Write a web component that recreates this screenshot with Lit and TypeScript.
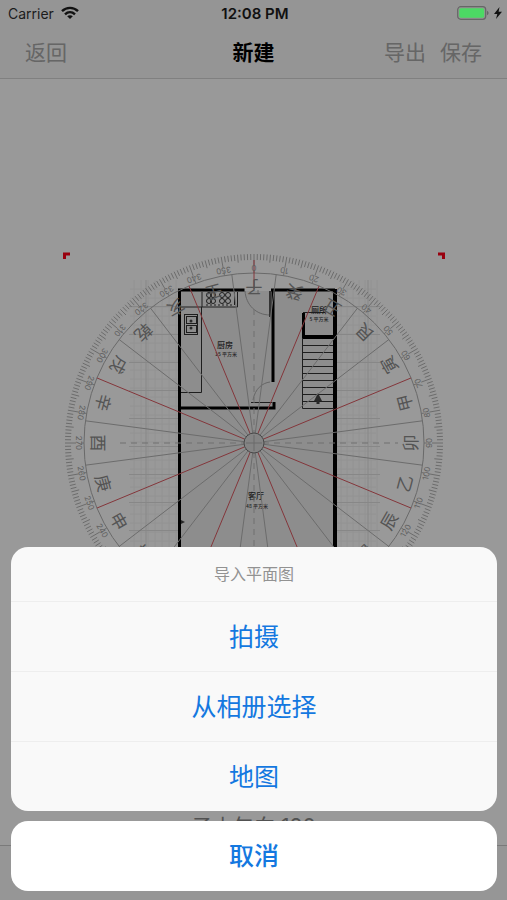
import { LitElement, html, css, svg } from "lit";
import { customElement, state } from "lit/decorators.js";

const CX = 254;
const CY = 443;
const MOUNTAINS = [..."子癸丑艮寅甲卯乙辰巽巳丙午丁未坤申庚酉辛戌乾亥壬"];

const range = (n: number) => Array.from({ length: n }, (_, i) => i);

/* Point on the dial: angle in degrees clockwise from north. */
const at = (deg: number, r: number): [number, number] => {
  const a = (deg * Math.PI) / 180;
  return [CX + r * Math.sin(a), CY - r * Math.cos(a)];
};

const ray = (deg: number, r1: number, r2: number, cls: string) => {
  const [x1, y1] = at(deg, r1);
  const [x2, y2] = at(deg, r2);
  return svg`<line class=${cls} x1=${x1} y1=${y1} x2=${x2} y2=${y2}></line>`;
};

const ringText = (deg: number, r: number, text: string, cls: string) => {
  const [x, y] = at(deg, r);
  return svg`<text class=${cls} x=${x} y=${y} transform="rotate(${deg + 180} ${x} ${y})">${text}</text>`;
};

@customElement("compass-plan")
class CompassPlan extends LitElement {
  static styles = css`
    :host { display: block; width: 382px; max-width: 100%; }
    svg { display: block; width: 100%; height: auto; font-family: "Noto Sans CJK SC", sans-serif; }
    text { text-anchor: middle; dominant-baseline: central; }
    .floor { fill: #ebebeb; }
    .grid { fill: none; stroke: #f4f4f4; stroke-width: 1; }
    .grid-main { fill: none; stroke: #e2e2e2; stroke-width: 1; }
    .wall { fill: none; stroke: #000; stroke-width: 3; }
    .wall-bold { fill: none; stroke: #000; stroke-width: 4; }
    .thin { fill: none; stroke: #333; stroke-width: 1; }
    .soft { fill: none; stroke: #aaa; stroke-width: 1; }
    .leaf { fill: none; stroke: #555; stroke-width: 2; }
    .solid { fill: #444; }
    .room { font-size: 8px; font-weight: 500; fill: #333; }
    .area { font-size: 5px; font-weight: 500; fill: #444; }
    .tick { stroke: #b4b4b4; stroke-width: 1; }
    .line { stroke: #b4b4b4; stroke-width: 1; }
    .red { stroke: #dc5a62; stroke-width: 1; }
    .ring { fill: none; stroke: #b0b0b0; stroke-width: 1; }
    .hub { fill: #ddd; stroke: #777; stroke-width: 1; }
    .dash { stroke: #bbb; stroke-width: 1; stroke-dasharray: 6 5; }
    .degree { font: 8px Inter, sans-serif; fill: #a0a0a0; }
    .mountain { font-size: 17px; fill: #8c8c8c; }
    .corner { fill: none; stroke: #ff0018; stroke-width: 3; }
  `;

  private plan() {
    return svg`
      <g>
        ${range(35).map((i) => svg`<path class="grid" d="M130 ${289 + i * 9}H180M337 ${289 + i * 9}H376"></path>`)}
        ${range(7).map((i) => svg`<path class="grid" d="M${134 + i * 7} 280V600M${341 + i * 6} 280V600"></path>`)}
        ${range(10).map((i) => svg`<path class="grid-main" d="M129 ${306.5 + i * 28}H178M337 ${306.5 + i * 28}H380"></path>`)}
        <path class="grid-main" d="M146 280V600M368 280V600"></path>
      </g>
      <rect class="floor" x="180" y="291" width="155" height="310"></rect>
      <path class="soft" d="M258 290V294M245 291C246 305 256 315 270 315M270 382C262 383 255 389 253 400"></path>
      <path class="leaf" d="M270 291V317"></path>
      <path class="thin" d="M181 307H201.500V392.500H181M201.500 307H237.500V292M202 292V307M234.500 292V305"></path>
      <rect class="thin" x="184.500" y="314.500" width="13" height="20"></rect>
      <rect class="thin" x="186.500" y="316.500" width="10" height="7"></rect>
      <rect class="thin" x="186.500" y="325.500" width="10" height="7"></rect>
      <circle class="solid" cx="191" cy="321" r="1.500"></circle>
      <circle class="solid" cx="191" cy="328" r="1.500"></circle>
      ${[209, 213, 222, 228].map((x) => svg`
        <circle class="thin" cx=${x} cy="295" r="2.500"></circle>
        <circle class="thin" cx=${x} cy="301" r="2.500"></circle>`)}
      <path class="thin" stroke-dasharray="2 2" d="M206 305H232"></path>
      <path class="wall" d="M244.500 290H179.500V605M180 408H274V402M273 382V290M271 290H335"></path>
      <path class="wall-bold" d="M335 289V605"></path>
      <path class="wall-bold" d="M302 337H335"></path>
      <path class="wall" d="M303.500 338V313"></path>
      <path class="thin" d="M303 312.500H325M251 402.500H272"></path>
      <path class="thin" d="M302.500 338V408.500H334"></path>
      ${range(9).map((i) => svg`<path class="thin" d="M303 ${345.5 + i * 7}H333"></path>`)}
      <path class="solid" d="M318 393L322 401H319.500V404H316.500V401H314Z"></path>
      <path class="solid" d="M181 520L185 522L181 524Z"></path>
      <text class="room" x="225" y="344">厨房</text>
      <text class="area" x="226" y="353">15 平方米</text>
      <text class="room" x="319" y="309">厕所</text>
      <text class="area" x="319" y="318">5 平方米</text>
      <text class="room" x="256" y="495">客厅</text>
      <text class="area" x="257" y="505">48 平方米</text>
    `;
  }

  private dial() {
    return svg`
      ${range(360).map((i) => ray(i, i % 10 === 0 ? 178 : i % 5 === 0 ? 181 : 183, 189, "tick"))}
      ${range(36).map((i) => ray(i * 10, 170, 173, "tick"))}
      <circle class="ring" cx=${CX} cy=${CY} r="170"></circle>
      <path class="dash" d="M${CX - 134} ${CY}H${CX + 144}M${CX} ${CY - 134}V${CY + 144}"></path>
      ${range(24).map((i) => ray(i * 15 + 7.5, 10, 170, i % 3 === 1 ? "red" : "line"))}
      ${ray(0, 154, 183, "red")}
      ${range(36).map((i) => ringText(i * 10, 175, String(i * 10), "degree"))}
      ${MOUNTAINS.map((m, i) => ringText(i * 15, 155, m, "mountain"))}
      <circle class="hub" cx=${CX} cy=${CY} r="10"></circle>
      <path class="ring" d="M246 443H262M254 435V451"></path>
      <path class="corner" d="M64.500 259V254H70M438 254H443.500V259"></path>
    `;
  }

  render() {
    return html`<svg viewBox="63 252 382 382" role="img" aria-label="罗盘平面图">${this.plan()}${this.dial()}</svg>`;
  }
}

@customElement("app-root")
class AppRoot extends LitElement {
  static styles = css`
    :host {
      display: flex;
      flex-direction: column;
      position: relative;
      min-height: 100vh;
      box-sizing: border-box;
      overflow: hidden;
      background: #fff;
      color: #000;
      font-family: Inter, "Noto Sans CJK SC", sans-serif;
    }
    button { appearance: none; border: 0; margin: 0; padding: 0; background: none; font: inherit; color: inherit; }
    .status {
      position: relative;
      z-index: 2;
      display: grid;
      grid-template-columns: 1fr auto 1fr;
      align-items: center;
      height: 26px;
      padding: 0 5px 0 8px;
      font-size: 14px;
      color: #1c1c1c;
    }
    .carrier, .power { display: flex; align-items: center; gap: 7px; }
    .power { justify-content: flex-end; gap: 4px; }
    .time { font-size: 15px; font-weight: 600; color: #111; }
    .top { background: #f8f8f8; border-bottom: 1px solid #d6d6d6; }
    .nav {
      display: grid;
      grid-template-columns: 1fr auto 1fr;
      align-items: center;
      height: 50px;
      padding: 2px 25px 0;
      font-size: 21px;
      line-height: 30px;
      color: #aaa;
    }
    .title { margin: 0; font-size: 21px; font-weight: 700; color: #000; }
    .back { justify-self: start; }
    .actions { display: flex; justify-content: flex-end; gap: 14px; }
    .stage { flex: 1; display: flex; flex-direction: column; align-items: center; padding-top: 173px; }
    .heading { margin: auto 0 0; padding-bottom: 3px; font-size: 21px; line-height: 30px; color: #888; }
    .toolbar { height: 54px; border-top: 1px solid #ccc; background: #fafafa; }
    .backdrop { position: absolute; inset: 0; z-index: 1; background: rgba(0, 0, 0, 0.4); }
    .sheet {
      position: absolute;
      z-index: 3;
      inset: auto 10px 9px 11px;
      display: flex;
      flex-direction: column;
      gap: 10px;
      font-size: 25px;
      line-height: 36px;
      color: #1478e0;
    }
    .group { display: flex; flex-direction: column; overflow: hidden; border-radius: 17px; background: #f9f9f9; }
    .caption { margin: 0; padding: 15px 0; font-size: 16px; font-weight: 400; line-height: 24px; text-align: center; color: #929292; }
    .option { height: 70px; border-top: 1px solid #eee; }
    .cancel { height: 70px; border-radius: 17px; background: #fff; font-weight: 500; }
  `;

  @state() private open = true;

  private close = () => { this.open = false; };

  render() {
    return html`
      <header class="top">
        <div class="status">
          <span class="carrier">Carrier
            <svg width="18" height="14" viewBox="0 0 18 14" fill="none" stroke="#111" stroke-width="2.400" aria-hidden="true">
              <path d="M1 5.200C5.500 .8 12.500 .8 17 5.200M4 8.300C7 5.500 11 5.500 14 8.300"></path>
              <path d="M9 13L6.200 10.200C7.800 8.900 10.200 8.900 11.800 10.200Z" fill="#111" stroke="none"></path>
            </svg>
          </span>
          <span class="time">12:08 PM</span>
          <span class="power">
            <svg width="33" height="14" viewBox="0 0 33 14" aria-hidden="true">
              <rect x=".7" y=".7" width="28" height="12.600" rx="3" fill="none" stroke="#666" stroke-width="1.200"></rect>
              <rect x="2.200" y="2.200" width="25" height="9.600" rx="1.800" fill="#4cd964"></rect>
              <path d="M30 4.800C32.200 5.800 32.200 8.200 30 9.200Z" fill="#666"></path>
            </svg>
            <svg width="8" height="12" viewBox="0 0 8 12" aria-hidden="true"><path d="M5.500 0L0 7H3.300L2 12L8 4.800H4.600Z" fill="#111"></path></svg>
          </span>
        </div>
        <nav class="nav">
          <button class="back">返回</button>
          <h1 class="title">新建</h1>
          <div class="actions"><button>导出</button><button>保存</button></div>
        </nav>
      </header>
      <main class="stage">
        <compass-plan></compass-plan>
        <p class="heading">子山午向 180</p>
      </main>
      <footer class="toolbar"></footer>
      ${this.open
        ? html`
            <div class="backdrop" @click=${this.close}></div>
            <section class="sheet" role="dialog" aria-labelledby="sheet-title">
              <div class="group">
                <h2 class="caption" id="sheet-title">导入平面图</h2>
                ${["拍摄", "从相册选择", "地图"].map((label) => html`<button class="option" @click=${this.close}>${label}</button>`)}
              </div>
              <button class="cancel" @click=${this.close}>取消</button>
            </section>`
        : null}
    `;
  }
}
